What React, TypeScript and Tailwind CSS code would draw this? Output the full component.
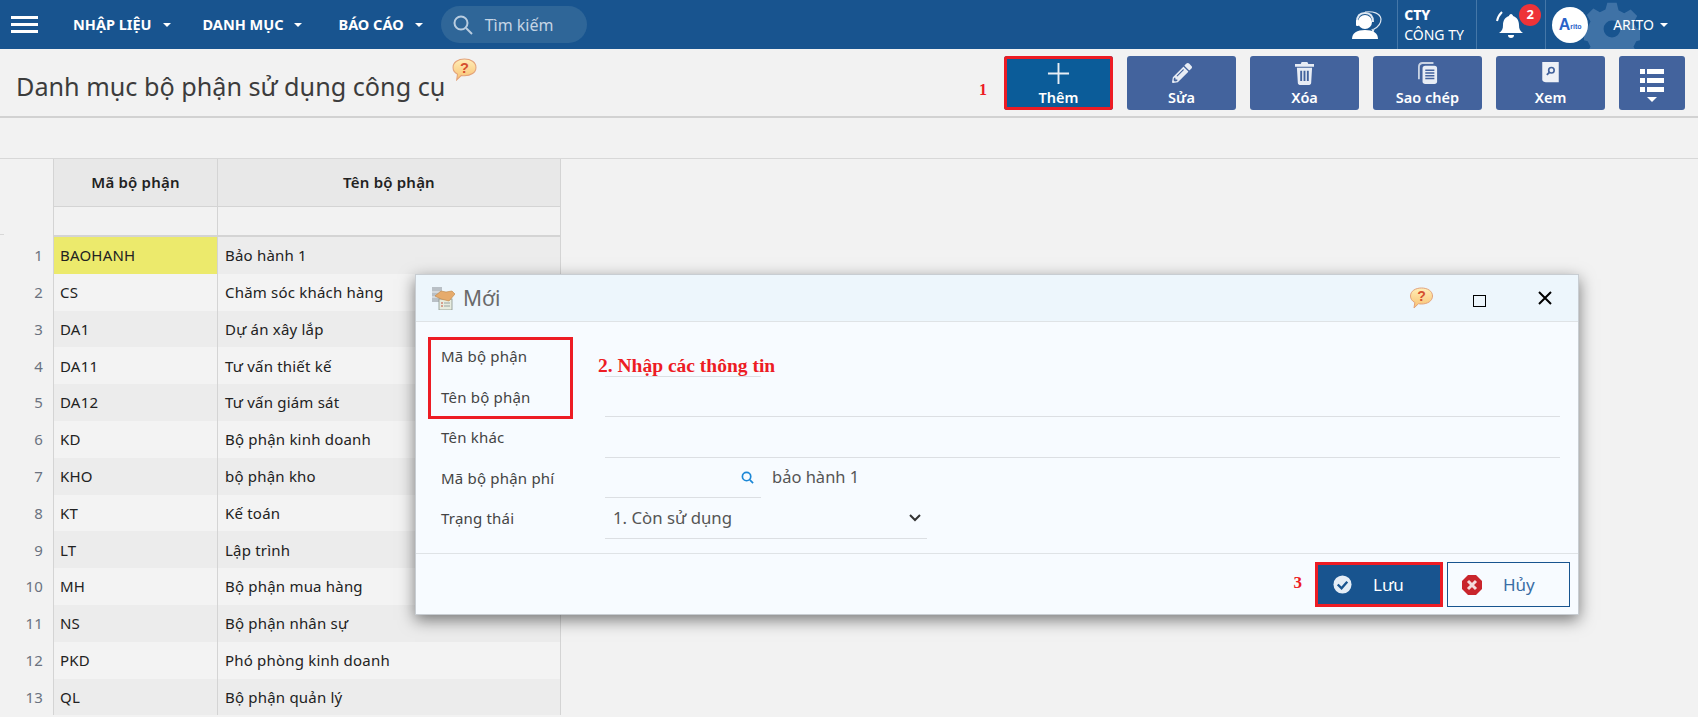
import { FaPencilAlt } from "react-icons/fa";

const rows = [
  ["BAOHANH", "Bảo hành 1"],
  ["CS", "Chăm sóc khách hàng"],
  ["DA1", "Dự án xây lắp"],
  ["DA11", "Tư vấn thiết kế"],
  ["DA12", "Tư vấn giám sát"],
  ["KD", "Bộ phận kinh doanh"],
  ["KHO", "bộ phận kho"],
  ["KT", "Kế toán"],
  ["LT", "Lập trình"],
  ["MH", "Bộ phận mua hàng"],
  ["NS", "Bộ phận nhân sự"],
  ["PKD", "Phó phòng kinh doanh"],
  ["QL", "Bộ phận quản lý"],
];

const Caret = ({ className = "" }: { className?: string }) => (
  <span
    className={`inline-block h-0 w-0 border-x-[4px] border-t-[4px] border-x-transparent border-t-white ${className}`}
  />
);

const HelpBubble = ({ className = "" }: { className?: string }) => (
  <svg viewBox="0 0 24 22" className={className}>
    <defs>
      <linearGradient id="bubble" x1="0" y1="0" x2="0" y2="1">
        <stop offset="0" stopColor="#ffeeb8" />
        <stop offset="1" stopColor="#f8c070" />
      </linearGradient>
    </defs>
    <path
      d="M12 1c6 0 11 3 11 8s-5 8-11 8c-1 0-2 0-3-.3L4.500 21l.8-5.500C2.500 14 1 11.700 1 9c0-5 5-8 11-8z"
      fill="url(#bubble)"
      stroke="#e3a27a"
      strokeWidth="1"
    />
    <text x="12" y="14" textAnchor="middle" fontSize="14" fontWeight="700" fill="#d5502f" fontFamily="Liberation Sans, sans-serif">
      ?
    </text>
  </svg>
);

const PlusIcon = () => (
  <svg viewBox="0 0 24 24" className="h-[23px] w-[23px]" stroke="#e8eef5" strokeWidth="2">
    <path d="M12 1v22M1 12h22" />
  </svg>
);

const TrashIcon = () => (
  <svg viewBox="0 0 20 24" className="h-[23px] w-[19px]" fill="#e8edf5">
    <path d="M7 0h6l1 2h6v3H0V2h6zM2 6h16l-1 16c0 1-1 2-2 2H5c-1 0-2-1-2-2zm3.500 3v11h2V9zm3.500 0v11h2V9zm3.500 0v11h2V9z" fillRule="evenodd" />
  </svg>
);

const CopyIcon = () => (
  <svg viewBox="0 0 22 24" className="h-[22px] w-[20px]">
    <path d="M5 0h12v2H5C4 2 2 3 2 5v14H0V5c0-3 2-5 5-5z" fill="#c9d3e3" />
    <rect x="5" y="4" width="16" height="20" rx="3" fill="#e8edf5" />
    <path d="M8 9h10M8 12h10M8 15h10M8 18h10" stroke="#43639d" strokeWidth="1.500" />
  </svg>
);

const ViewIcon = () => (
  <svg viewBox="0 0 20 24" className="h-[22px] w-[19px]">
    <path d="M1 0h18v22H5c-2 0-4-1-4-3z" fill="#eef1f7" />
    <circle cx="11" cy="9" r="3" fill="none" stroke="#43639d" strokeWidth="1.800" />
    <path d="M9 11l-3 3" stroke="#43639d" strokeWidth="2" />
  </svg>
);

const ListIcon = () => (
  <svg viewBox="0 0 24 23" className="h-[23px] w-[24px]" fill="#fff">
    <path d="M0 0h5v5H0zM7 0h17v5H7zM0 9h5v5H0zM7 9h17v5H7zM0 18h5v5H0zM7 18h17v5H7z" />
  </svg>
);

const AgentIcon = () => (
  <svg viewBox="0 0 30 28" className="h-[28px] w-[30px]">
    <path d="M13 1c8-1 15 1 16 7 0 5-3 8-7 10l-1 3-1-3" fill="none" stroke="#dfe8f2" strokeWidth="1.200" />
    <circle cx="13" cy="11" r="7" fill="#fff" />
    <path d="M5 11c0-6 3-9 8-9s8 3 8 9" fill="none" stroke="#dfe8f2" strokeWidth="2" />
    <rect x="4" y="9" width="3" height="6" rx="1" fill="#fff" />
    <path d="M0 28c0-6 5-9 13-9s13 3 13 9z" fill="#fff" />
  </svg>
);

const BellIcon = () => (
  <svg viewBox="0 0 28 28" className="h-[28px] w-[28px]" fill="#fff">
    <path d="M15 3c1 0 2 1 2 2 3.500 1 6 4 6 9 0 4 1 6 4 8H3c3-2 4-4 4-8 0-5 2.500-8 6-9 0-1 1-2 2-2z" />
    <path d="M12 24h6c0 2-1 3-3 3s-3-1-3-3z" />
    <path d="M6 1C3 4 1.500 7 1 10" fill="none" stroke="#fff" strokeWidth="2" />
  </svg>
);

const GearIcon = () => (
  <svg viewBox="0 0 60 60" className="absolute left-[1584px] top-[1px] h-[56px] w-[56px]" fill="#3f72a6">
    <path
      fillRule="evenodd"
      d="M25 2h10l2 8 6 3 7-4 7 7-4 7 3 6 8 2v10l-8 2-3 6 4 7-7 7-7-4-6 3-2 8H25l-2-8-6-3-7 4-7-7 4-7-3-6-8-2V30l8-2 3-6-4-7 7-7 7 4 6-3zM30 21a9 9 0 1 0 0 18 9 9 0 0 0 0-18z"
    />
  </svg>
);

const DialogIcon = () => (
  <svg viewBox="0 0 23 23" className="h-[23px] w-[23px]">
    <rect x="0" y="0" width="10" height="15" fill="#b9c0c6" />
    <path d="M0 5h10M0 10h10" stroke="#eef1f4" />
    <rect x="7" y="12" width="13" height="11" fill="#e7ecdf" stroke="#8b958c" strokeWidth="0.800" />
    <path d="M9 16h2M9 19h2" stroke="#c2553f" />
    <path d="M12 16h6M12 19h6" stroke="#9aa3a0" />
    <path d="M3 9l6-5 5 1 6-1 3 3-6 7-4-1-4-1z" fill="#e6ab6c" stroke="#bd8445" strokeWidth="0.600" />
  </svg>
);

const NavMenu = ({ label, className }: { label: string; className: string }) => (
  <div className={`flex items-center ${className}`}>
    <span className="text-[14.500px] font-bold text-white">{label}</span>
    <Caret className="ml-[11px]" />
  </div>
);

const ToolButton = ({
  label,
  icon,
  active = false,
}: {
  label: string;
  icon: React.ReactNode;
  active?: boolean;
}) => (
  <button
    className={`flex h-[54px] w-[109px] flex-col items-center justify-start rounded-[3px] pt-[3px] text-white ${
      active ? "bg-[#0b5c99] outline-[3px] -outline-offset-[3px] outline-[#ed1c24]" : "bg-[#43639d]"
    }`}
  >
    <span className="flex h-[28px] items-center">{icon}</span>
    <span className="text-[14.500px] font-semibold leading-[20px]">{label}</span>
  </button>
);

const Field = ({
  label,
  children,
  line,
}: {
  label: string;
  children?: React.ReactNode;
  line: string;
}) => (
  <div className="flex h-[40.500px] items-center">
    <div className="w-[189px] pl-[25px] text-[15px] tracking-[0.2px] text-[#444]">{label}</div>
    {children ?? <div className={`h-full ${line}`} />}
  </div>
);

export default function App() {
  return (
    <div className="relative h-[717px] overflow-hidden bg-[#f2f2f2] font-['Noto_Sans',sans-serif] text-[#222]">
      {/* Top bar */}
      <header className="relative flex h-[49px] items-center overflow-hidden bg-[#18548f]">
        <div className="ml-[11px] flex h-[17px] w-[27px] flex-col justify-between">
          <span className="h-[3px] bg-white" />
          <span className="h-[3px] bg-white" />
          <span className="h-[3px] bg-white" />
        </div>
        <NavMenu label="NHẬP LIỆU" className="ml-[35px]" />
        <NavMenu label="DANH MỤC" className="ml-[32px]" />
        <NavMenu label="BÁO CÁO" className="ml-[36px]" />
        <div className="ml-[18px] flex h-[37px] w-[146px] items-center rounded-full bg-[#2f6698] pl-[12px]">
          <svg viewBox="0 0 20 20" className="h-[20px] w-[20px]" fill="none" stroke="#b9cde0" strokeWidth="2">
            <circle cx="8" cy="8" r="6.500" />
            <path d="M13 13l6 6" />
          </svg>
          <span className="ml-[12px] text-[16px] text-[#c5d5e5]">Tìm kiếm</span>
        </div>

        <GearIcon />
        <div className="relative ml-auto flex h-full items-center">
          <AgentIcon />
          <div className="ml-[15px] flex h-full w-[80px] flex-col justify-center border-x border-[#4577a8] pl-[6px] text-white">
            <span className="text-[14px] font-extrabold leading-[20px]">CTY</span>
            <span className="text-[14px] leading-[20px]">CÔNG TY</span>
          </div>
          <div className="relative flex h-full w-[69px] items-center border-r border-[#4577a8] pl-[19px]">
            <BellIcon />
            <span className="absolute left-[42px] top-[4px] flex h-[22px] w-[22px] items-center justify-center rounded-full bg-[#ee3338] text-[13px] font-bold text-white">
              2
            </span>
          </div>
          <div className="ml-[6px] flex h-[36px] w-[36px] items-center justify-center rounded-full bg-white font-['Liberation_Sans',sans-serif] font-bold text-[#2a63c9]">
            <span className="text-[16px] leading-[16px]">A</span>
            <span className="mt-[4px] text-[7px] leading-[8px]">rito</span>
          </div>
          <span className="ml-[25px] text-[14px] text-white">ARITO</span>
          <Caret className="ml-[6px] mr-[30px]" />
        </div>
      </header>

      {/* Toolbar */}
      <div className="flex h-[69px] items-start border-b-2 border-[#d2d2d2]">
        <h1 className="ml-[16px] mt-[19px] text-[25.200px] leading-[36px] text-[#3c3c3c]">Danh mục bộ phận sử dụng công cụ</h1>
        <HelpBubble className="ml-[7px] mt-[9px] h-[23px] w-[25px]" />
        <div className="ml-auto mr-[13px] mt-[7px] flex items-start gap-[17px]">
          <span className="mt-[22px] font-['Liberation_Serif',serif] text-[16px] font-bold text-[#ed1c24]">1</span>
          <div className="flex gap-[14px]">
            <ToolButton active label="Thêm" icon={<PlusIcon />} />
            <ToolButton label="Sửa" icon={<FaPencilAlt className="h-[20px] w-[20px] text-[#e8edf5]" />} />
            <ToolButton label="Xóa" icon={<TrashIcon />} />
            <ToolButton label="Sao chép" icon={<CopyIcon />} />
            <ToolButton label="Xem" icon={<ViewIcon />} />
            <button className="flex h-[54px] w-[66px] flex-col items-center rounded-[3px] bg-[#43639d] pt-[13px]">
              <ListIcon />
              <Caret className="mt-[5px] border-x-[5px] border-t-[5px]" />
            </button>
          </div>
        </div>
      </div>

      <div className="h-[40px]" />

      {/* Table */}
      <div className="border-t border-[#d8d8d8]">
        <div className="flex h-[48px]">
          <div className="w-[54px] border-r border-[#d4d4d4]" />
          <div className="flex w-[164px] items-center justify-center border-r border-b border-[#d4d4d4] bg-[#e8e8e8] text-[15px] font-semibold tracking-[0.2px]">
            Mã bộ phận
          </div>
          <div className="flex w-[343px] items-center justify-center border-r border-b border-[#d4d4d4] bg-[#e8e8e8] text-[15px] font-semibold tracking-[0.2px]">
            Tên bộ phận
          </div>
        </div>
        <div className="flex h-[30px]">
          <div className="flex w-[54px] items-end border-r border-[#d4d4d4] pb-[2px]">
            <span className="h-px w-[4px] bg-[#d8d8d8]" />
          </div>
          <div className="w-[164px] border-r border-b-2 border-[#d4d4d4]" />
          <div className="w-[343px] border-r border-b-2 border-[#d4d4d4]" />
        </div>
        {rows.map(([code, name], i) => (
          <div key={code} className="flex h-[36.800px] text-[15px] tracking-[0.2px]">
            <div className="flex w-[54px] items-center justify-end border-r border-[#d4d4d4] pr-[10px] text-[#6b7280]">
              {i + 1}
            </div>
            <div
              className={`flex w-[164px] items-center border-r border-[#d4d4d4] pl-[6px] ${
                i === 0 ? "bg-[#ecea6c]" : i % 2 === 0 ? "bg-[#ececec]" : "bg-[#f3f3f3]"
              }`}
            >
              {code}
            </div>
            <div
              className={`flex w-[343px] items-center border-r border-[#d4d4d4] pl-[7px] ${
                i % 2 === 0 ? "bg-[#ececec]" : "bg-[#f3f3f3]"
              }`}
            >
              {name}
            </div>
          </div>
        ))}
      </div>

      {/* Dialog */}
      <div className="absolute left-[415px] top-[274px] flex h-[341px] w-[1164px] flex-col border border-[#c8cdd2] bg-[#f7fbff] shadow-[0_5px_15px_rgba(0,0,0,0.5)]">
        <div className="flex h-[47px] shrink-0 items-center border-b border-[#dfe3e6] bg-[#edf6fc] pl-[16px]">
          <DialogIcon />
          <span className="ml-[8px] mt-[1px] text-[21px] text-[#6a6a6a]">Mới</span>
          <HelpBubble className="ml-auto h-[22px] w-[25px]" />
          <span className="ml-[39px] mt-[5px] h-[12px] w-[13px] border border-black" />
          <svg viewBox="0 0 14 14" className="ml-[52px] mr-[26px] h-[14px] w-[14px]" stroke="#000" strokeWidth="2">
            <path d="M1 1l12 12M13 1L1 13" />
          </svg>
        </div>

        <div className="relative flex-1 pt-[14px]">
          <Field label="Mã bộ phận" line="w-[156px] border-b border-[#dcdfe3]" />
          <Field label="Tên bộ phận" line="w-[955px] border-b border-[#dcdfe3]" />
          <Field label="Tên khác" line="w-[955px] border-b border-[#dcdfe3]" />
          <Field label="Mã bộ phận phí" line="">
            <div className="flex h-full w-[156px] items-center justify-end border-b border-[#dcdfe3] pr-[7px]">
              <svg viewBox="0 0 14 14" className="h-[13px] w-[13px]" fill="none" stroke="#1b87d6" strokeWidth="1.800">
                <circle cx="6" cy="6" r="4.500" />
                <path d="M9.500 9.500L13 13" />
              </svg>
            </div>
            <span className="ml-[11px] text-[16.500px] text-[#555]">bảo hành 1</span>
          </Field>
          <Field label="Trạng thái" line="">
            <div className="flex h-full w-[322px] items-center border-b border-[#dcdfe3] pl-[8px] pr-[6px] text-[16.800px] text-[#555]">
              1. Còn sử dụng
              <svg viewBox="0 0 12 8" className="ml-auto h-[8px] w-[12px]" fill="none" stroke="#333" strokeWidth="2">
                <path d="M1 1l5 5 5-5" />
              </svg>
            </div>
          </Field>

          {/* Annotations */}
          <div className="absolute left-[12px] top-[15px] h-[82px] w-[145px] border-[3px] border-[#ed1c24]" />
          <span className="absolute left-[182px] top-[32px] font-['Liberation_Serif',serif] text-[19.500px] font-bold leading-[24px] text-[#ed1c24]">
            2. Nhập các thông tin
          </span>
        </div>

        <div className="flex h-[61px] shrink-0 items-start justify-end border-t border-[#dfe3e6] pr-[8px] pt-[8px]">
          <span className="mr-[13px] mt-[8px] font-['Liberation_Serif',serif] text-[17px] font-bold text-[#ed1c24]">3</span>
          <button className="flex h-[45px] w-[128px] items-center border-[3px] border-[#ed1c24] bg-[#18548f] pl-[15px] text-white">
            <svg viewBox="0 0 20 20" className="h-[19px] w-[19px]">
              <circle cx="10" cy="10" r="9.500" fill="#e4edf6" />
              <path d="M5 10l4 4 6-7" fill="none" stroke="#18548f" strokeWidth="2.500" />
            </svg>
            <span className="ml-[21px] text-[17px]">Lưu</span>
          </button>
          <button className="ml-[4px] flex h-[45px] w-[123px] items-center border border-[#18548f] pl-[14px] text-[#3a6ea5]">
            <svg viewBox="0 0 20 20" className="h-[20px] w-[20px]">
              <path d="M6 0h8l6 6v8l-6 6H6l-6-6V6z" fill="#c9252c" />
              <path d="M6 6l8 8M14 6l-8 8" stroke="#f4dcdc" strokeWidth="3" />
            </svg>
            <span className="ml-[21px] text-[17px]">Hủy</span>
          </button>
        </div>
      </div>
    </div>
  );
}
